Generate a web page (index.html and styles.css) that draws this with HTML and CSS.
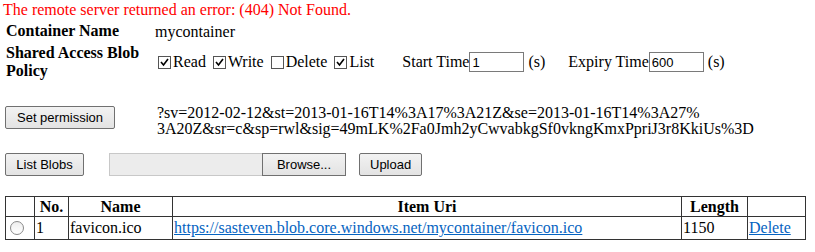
FILE: index.html
```html
<!DOCTYPE html>
<html>
<head>
  <title>Blob Container</title>
  <link rel="stylesheet" href="styles.css">
</head>
<body>
  <div class="error">The remote server returned an error: (404) Not Found.</div>
  <div class="form">
    <div class="label">Container Name</div>
    <div class="value">mycontainer</div>
    <div class="label">Shared Access Blob Policy</div>
    <div class="value policy">
      <label><input type="checkbox" checked>Read</label>
      <label><input type="checkbox" checked>Write</label>
      <label><input type="checkbox">Delete</label>
      <label><input type="checkbox" checked>List</label>
      <span class="time">Start Time<input type="text" class="num" value="1"> (s)</span>
      <span class="time">Expiry Time<input type="text" class="num" value="600"> (s)</span>
    </div>
  </div>
  <div class="perm">
    <div class="cell-btn"><button>Set permission</button></div>
    <div class="sas">?sv=2012-02-12&amp;st=2013-01-16T14%3A17%3A21Z&amp;se=2013-01-16T14%3A27%<br>3A20Z&amp;sr=c&amp;sp=rwl&amp;sig=49mLK%2Fa0Jmh2yCwvabkgSf0vkngKmxPpriJ3r8KkiUs%3D</div>
  </div>
  <div class="actions">
    <button>List Blobs</button>
    <span class="file"><span class="file-field"></span><button class="browse">Browse...</button></span>
    <button>Upload</button>
  </div>
  <table class="blobs">
    <tr>
      <th class="c-sel"></th>
      <th class="c-no">No.</th>
      <th class="c-name">Name</th>
      <th class="c-uri">Item Uri</th>
      <th class="c-len">Length</th>
      <th class="c-del"></th>
    </tr>
    <tr>
      <td class="c-sel"><input type="radio" name="blob"></td>
      <td>1</td>
      <td>favicon.ico</td>
      <td><a href="#">https://sasteven.blob.core.windows.net/mycontainer/favicon.ico</a></td>
      <td>1150</td>
      <td><a href="#">Delete</a></td>
    </tr>
  </table>
</body>
</html>
```

FILE: styles.css
```css
body { font-family: "Liberation Serif", "Times New Roman", serif; font-size: 16px; margin: 0 3px; color: #000; background: #fff; }
.error { color: red; height: 22px; line-height: 20px; }
.form { display: grid; grid-template-columns: 149px auto; margin-left: 3px; row-gap: 2px; }
.label { font-weight: bold; width: 140px; line-height: 18px; }
.value { display: flex; align-items: center; line-height: 18px; }
.form .label:first-child, .form .value:nth-child(2) { height: 20px; }
.policy { height: 36px; padding-bottom: 4px; }
.policy label { display: flex; align-items: center; margin-right: 4px; }
.policy input[type=checkbox] { appearance: none; width: 13px; height: 13px; margin: 0 2px 0 3px; border: 1px solid #555; background: #fff; }
.policy input[type=checkbox]:checked { background: #fff url("data:image/svg+xml;utf8,<svg xmlns='http://www.w3.org/2000/svg' width='11' height='11'><path d='M2 5l2.5 3L9 2' fill='none' stroke='%23000' stroke-width='1.6'/></svg>") no-repeat center; }
.time { display: flex; align-items: center; margin-left: 24px; }
.time + .time { margin-left: 23px; }
.num { width: 49px; height: 18px; border: 1px solid #7a7a7a; padding: 0 2px; margin: 0 4px 0 0; font: 13px "Liberation Sans", Arial, sans-serif; }
button { font: 13px "Liberation Sans", Arial, sans-serif; height: 23px; padding: 0 10px; border: 1px solid #707070; border-radius: 2px; background: linear-gradient(#f2f2f2, #e3e3e3); color: #000; }
.perm { display: flex; align-items: flex-start; margin-top: 21px; }
.cell-btn { width: 152px; padding: 1px 0 0 2px; }
.perm button { width: 110px; }
.sas { line-height: 16px; }
.actions { display: flex; align-items: center; margin: 16px 0 0 2px; }
.actions > button:first-child { width: 79px; }
.file { display: flex; margin-left: 25px; }
.file-field { width: 152px; height: 21px; border: 1px solid #c8c8c8; border-right: none; background: #ececec; }
.file .browse { width: 84px; border-radius: 0; }
.actions > button:last-child { margin-left: 13px; width: 63px; }
.blobs { border-collapse: collapse; margin: 20px 0 0 2px; width: 801px; }
.blobs th, .blobs td { border: 1px solid #333; padding: 0 1px; text-align: left; height: 20px; }
.blobs th { text-align: center; height: 19px; }
.blobs td { height: 22px; }
.c-sel { width: 26px; }
.c-no { width: 31px; }
.c-name { width: 101px; }
.c-len { width: 63px; }
.c-del { width: 55px; }
.blobs a { color: #0563c1; }
.blobs input[type=radio] { appearance: none; width: 14px; height: 14px; border: 1px solid #8a8a8a; border-radius: 50%; margin: 0 0 2px 3px; background: linear-gradient(#eee, #fff); vertical-align: middle; }
```
